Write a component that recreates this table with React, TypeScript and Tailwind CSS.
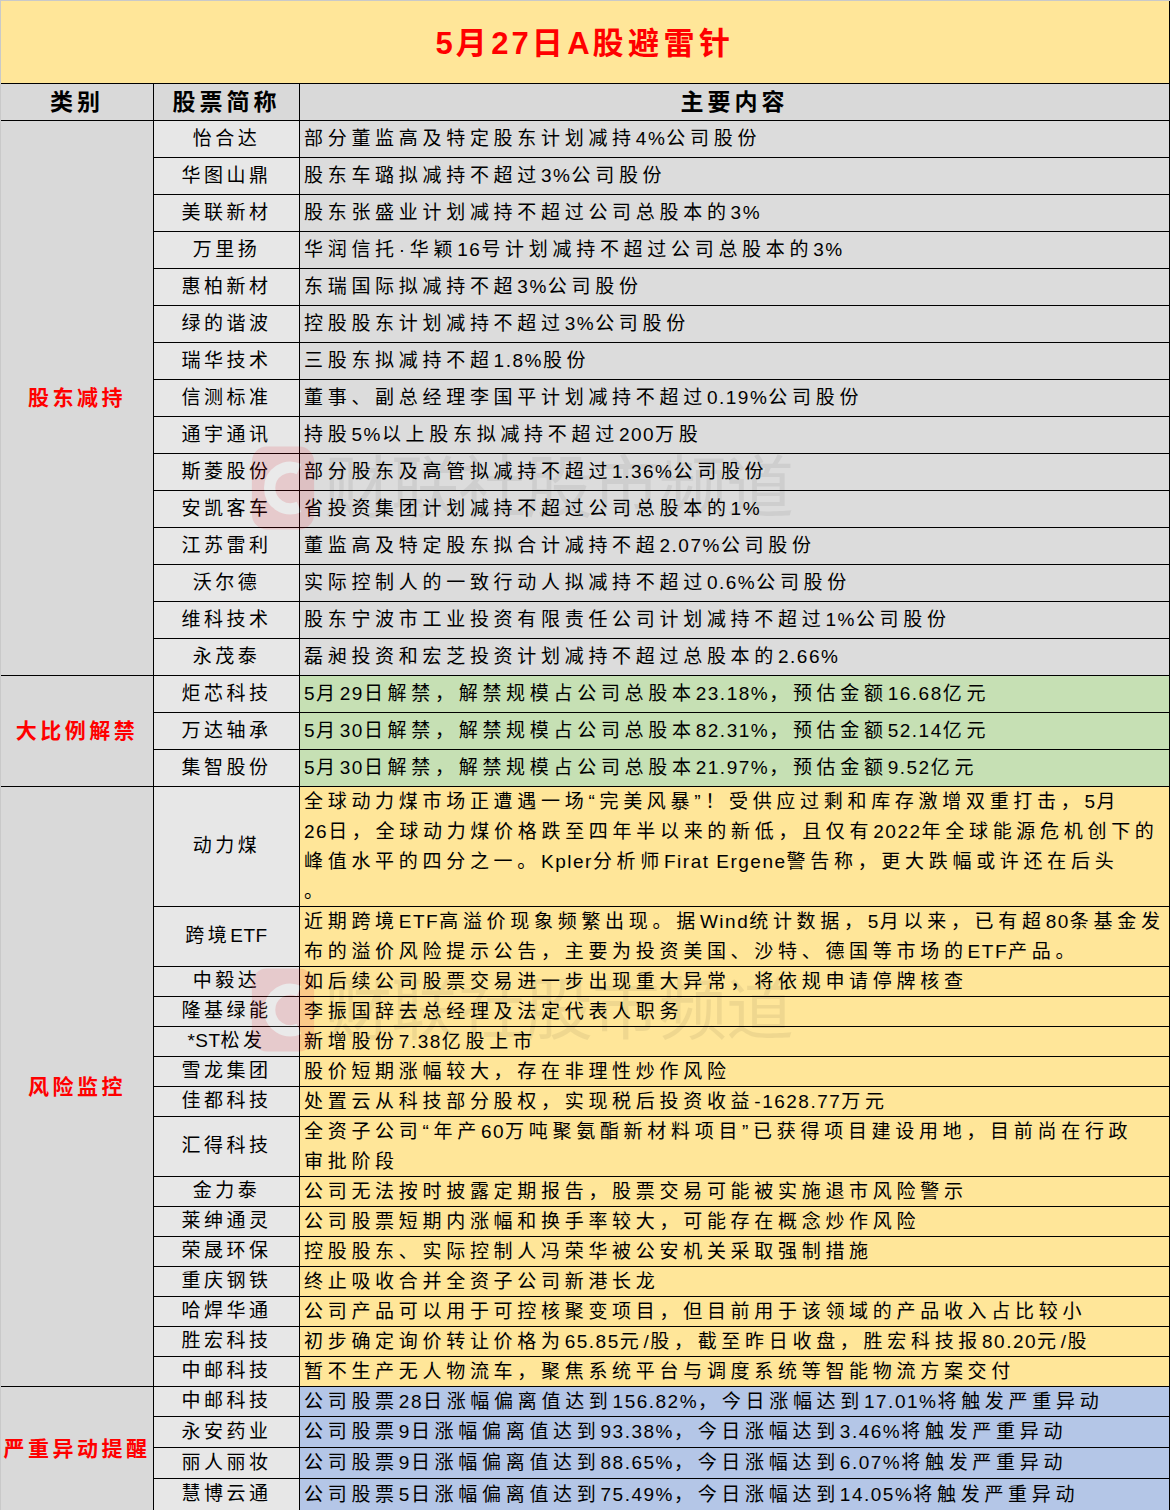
import React from 'react';

type Row = { name: string; lines: string[]; h: string };

const FONT = { fontFamily: "'Liberation Sans', 'Noto Sans CJK SC', sans-serif" };

// ascii runs get a lighter spacing than the CJK glyphs
function T({ s, a = 'tracking-[1.5px]' }: { s: string; a?: string }) {
  const parts = s.split(/([\x20-\x7E]+)/);
  return (
    <>
      {parts.map((p, i) =>
        /^[\x20-\x7E]+$/.test(p) ? (
          <span key={i} className={a}>
            {p}
          </span>
        ) : (
          <React.Fragment key={i}>{p}</React.Fragment>
        )
      )}
    </>
  );
}

const r = (name: string, text: string | string[], h = 'h-[37px]'): Row => ({
  name,
  lines: Array.isArray(text) ? text : [text],
  h,
});

const SECTIONS: { label: string; bg: string; rows: Row[] }[] = [
  {
    label: '股东减持',
    bg: 'bg-[#dcdcdc]',
    rows: [
      r('怡合达', '部分董监高及特定股东计划减持4%公司股份'),
      r('华图山鼎', '股东车璐拟减持不超过3%公司股份'),
      r('美联新材', '股东张盛业计划减持不超过公司总股本的3%'),
      r('万里扬', '华润信托·华颖16号计划减持不超过公司总股本的3%'),
      r('惠柏新材', '东瑞国际拟减持不超3%公司股份'),
      r('绿的谐波', '控股股东计划减持不超过3%公司股份'),
      r('瑞华技术', '三股东拟减持不超1.8%股份'),
      r('信测标准', '董事、副总经理李国平计划减持不超过0.19%公司股份'),
      r('通宇通讯', '持股5%以上股东拟减持不超过200万股'),
      r('斯菱股份', '部分股东及高管拟减持不超过1.36%公司股份'),
      r('安凯客车', '省投资集团计划减持不超过公司总股本的1%'),
      r('江苏雷利', '董监高及特定股东拟合计减持不超2.07%公司股份'),
      r('沃尔德', '实际控制人的一致行动人拟减持不超过0.6%公司股份'),
      r('维科技术', '股东宁波市工业投资有限责任公司计划减持不超过1%公司股份'),
      r('永茂泰', '磊昶投资和宏芝投资计划减持不超过总股本的2.66%'),
    ],
  },
  {
    label: '大比例解禁',
    bg: 'bg-[#c6e0b4]',
    rows: [
      r('炬芯科技', '5月29日解禁，解禁规模占公司总股本23.18%，预估金额16.68亿元'),
      r('万达轴承', '5月30日解禁，解禁规模占公司总股本82.31%，预估金额52.14亿元'),
      r('集智股份', '5月30日解禁，解禁规模占公司总股本21.97%，预估金额9.52亿元'),
    ],
  },
  {
    label: '风险监控',
    bg: 'bg-[#ffe699]',
    rows: [
      r(
        '动力煤',
        [
          '全球动力煤市场正遭遇一场“完美风暴”！受供应过剩和库存激增双重打击，5月',
          '26日，全球动力煤价格跌至四年半以来的新低，且仅有2022年全球能源危机创下的',
          '峰值水平的四分之一。Kpler分析师Firat Ergene警告称，更大跌幅或许还在后头',
          '。',
        ],
        'h-[120px]'
      ),
      r(
        '跨境ETF',
        [
          '近期跨境ETF高溢价现象频繁出现。据Wind统计数据，5月以来，已有超80条基金发',
          '布的溢价风险提示公告，主要为投资美国、沙特、德国等市场的ETF产品。',
        ],
        'h-[60px]'
      ),
      r('中毅达', '如后续公司股票交易进一步出现重大异常，将依规申请停牌核查', 'h-[30px]'),
      r('隆基绿能', '李振国辞去总经理及法定代表人职务', 'h-[30px]'),
      r('*ST松发', '新增股份7.38亿股上市', 'h-[30px]'),
      r('雪龙集团', '股价短期涨幅较大，存在非理性炒作风险', 'h-[30px]'),
      r('佳都科技', '处置云从科技部分股权，实现税后投资收益-1628.77万元', 'h-[30px]'),
      r(
        '汇得科技',
        ['全资子公司“年产60万吨聚氨酯新材料项目”已获得项目建设用地，目前尚在行政', '审批阶段'],
        'h-[60px]'
      ),
      r('金力泰', '公司无法按时披露定期报告，股票交易可能被实施退市风险警示', 'h-[30px]'),
      r('莱绅通灵', '公司股票短期内涨幅和换手率较大，可能存在概念炒作风险', 'h-[30px]'),
      r('荣晟环保', '控股股东、实际控制人冯荣华被公安机关采取强制措施', 'h-[30px]'),
      r('重庆钢铁', '终止吸收合并全资子公司新港长龙', 'h-[30px]'),
      r('哈焊华通', '公司产品可以用于可控核聚变项目，但目前用于该领域的产品收入占比较小', 'h-[30px]'),
      r('胜宏科技', '初步确定询价转让价格为65.85元/股，截至昨日收盘，胜宏科技报80.20元/股', 'h-[30px]'),
      r('中邮科技', '暂不生产无人物流车，聚焦系统平台与调度系统等智能物流方案交付', 'h-[30px]'),
    ],
  },
  {
    label: '严重异动提醒',
    bg: 'bg-[#b4c6e7]',
    rows: [
      r('中邮科技', '公司股票28日涨幅偏离值达到156.82%，今日涨幅达到17.01%将触发严重异动', 'h-[30px]'),
      r('永安药业', '公司股票9日涨幅偏离值达到93.38%，今日涨幅达到3.46%将触发严重异动', 'h-[31px]'),
      r('丽人丽妆', '公司股票9日涨幅偏离值达到88.65%，今日涨幅达到6.07%将触发严重异动', 'h-[31px]'),
      r('慧博云通', '公司股票5日涨幅偏离值达到75.49%，今日涨幅达到14.05%将触发严重异动', 'h-[32px]'),
    ],
  },
];

function Watermark({ top }: { top: string }) {
  return (
    <div className={`pointer-events-none absolute left-[250px] flex items-center gap-2 ${top}`}>
      <svg width="66" height="96" viewBox="0 0 70 100" className="opacity-[0.12]">
        <rect x="2" y="6" width="66" height="88" rx="16" fill="#e60012" />
        <path d="M52 30 A22 22 0 1 0 52 70" fill="none" stroke="#fff" strokeWidth="12" />
      </svg>
      <span className="text-[68px] leading-none tracking-[-1px] text-[#000] opacity-[0.06]">财联社股市频道</span>
    </div>
  );
}

export default function App() {
  return (
    <div style={FONT} className="relative w-[1170px] bg-white text-black">
      <div className="border-l border-t border-[#c9c9c9]">
        {/* title */}
        <div className="flex h-[83px] items-center justify-center border-b border-r border-black bg-[#ffe699] pt-1">
          <h1 className="text-[31px] font-bold tracking-[4.5px] text-[#ff0000]">
            <T s="5月27日A股避雷针" a="tracking-[3px]" />
          </h1>
        </div>

        {/* header */}
        <div className="flex h-[37px] bg-[#d9d9d9] text-[23px] font-bold tracking-[4px]">
          <div className="flex w-[153px] shrink-0 items-center justify-center border-b border-r border-black">类别</div>
          <div className="flex w-[146px] shrink-0 items-center justify-center border-b border-r border-black">股票简称</div>
          <div className="flex flex-1 items-center justify-center border-b border-r border-black">主要内容</div>
        </div>

        {SECTIONS.map((sec) => (
          <div key={sec.label} className="flex">
            <div className="flex w-[153px] shrink-0 items-center justify-center border-b border-r border-black bg-[#d9d9d9] text-[21px] font-bold tracking-[3.5px] text-[#ff0000]">
              {sec.label}
            </div>
            <div className="flex flex-1 flex-col">
              {sec.rows.map((row, i) => (
                <div key={i} className={`flex ${row.h} text-[19px]`}>
                  <div className="flex w-[146px] shrink-0 items-center justify-center border-b border-r border-black bg-[#e7e7e7] tracking-[3.5px]">
                    <T s={row.name} a="tracking-[0.5px]" />
                  </div>
                  <div
                    className={`flex flex-1 flex-col justify-center overflow-hidden whitespace-nowrap border-b border-r border-black pl-[4px] tracking-[4.7px] ${sec.bg}`}
                  >
                    {row.lines.map((l, j) => (
                      <div key={j} className="leading-[30px]">
                        <T s={l} />
                      </div>
                    ))}
                  </div>
                </div>
              ))}
            </div>
          </div>
        ))}
      </div>

      <Watermark top="top-[440px]" />
      <Watermark top="top-[962px]" />
    </div>
  );
}
